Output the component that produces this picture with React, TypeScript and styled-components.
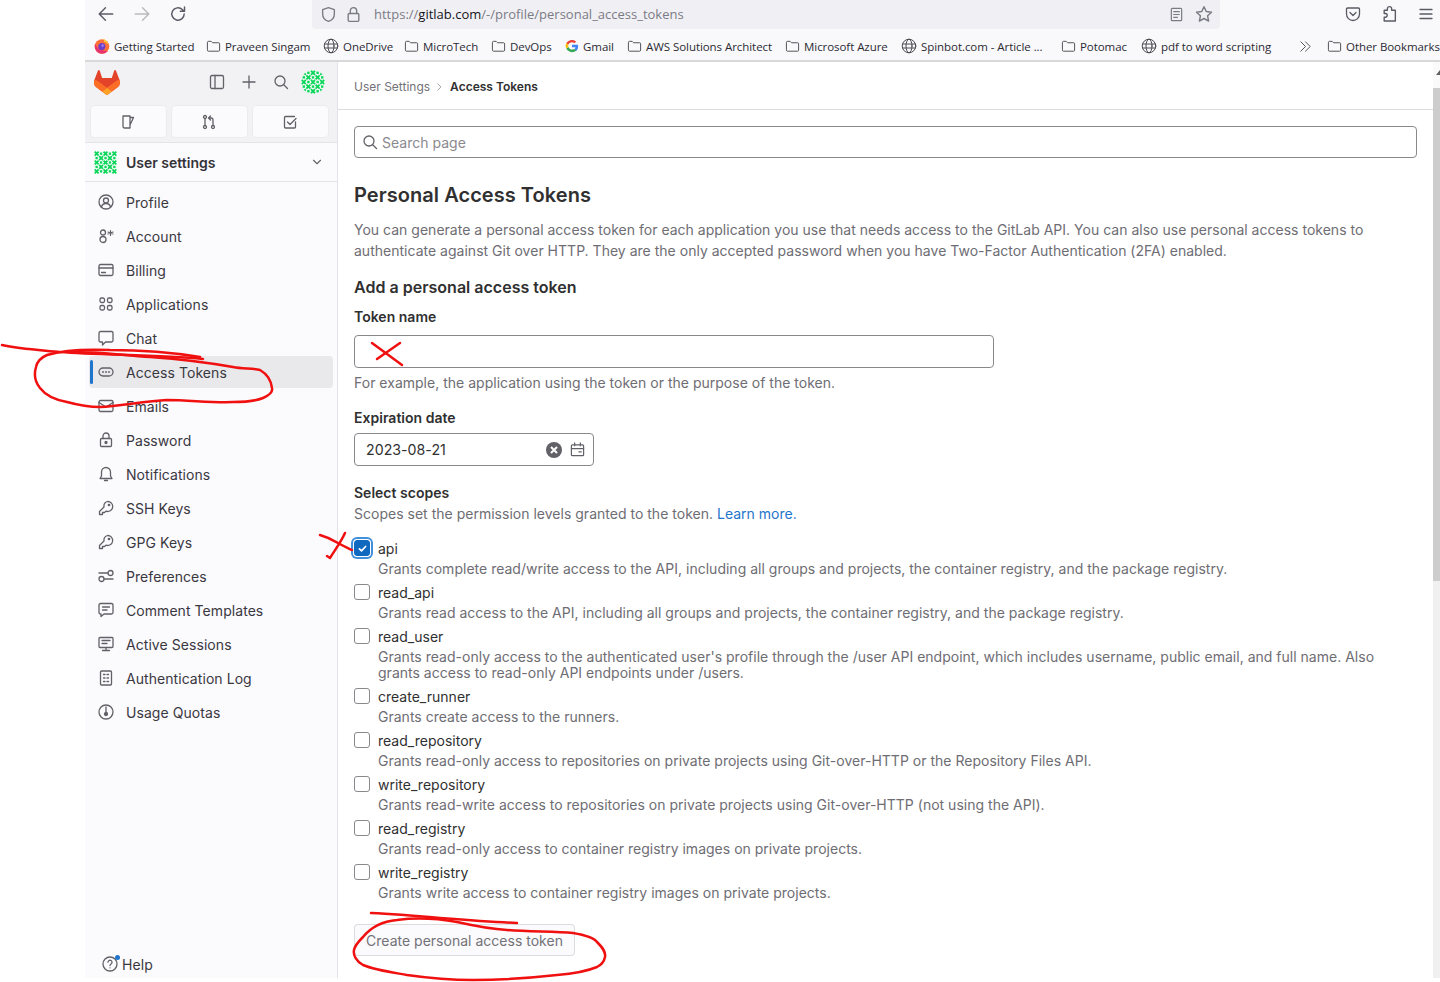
import React from 'react';
import styled, { createGlobalStyle } from 'styled-components';

const GlobalStyle = createGlobalStyle`
  html, body {
    margin: 0;
    padding: 0;
    background: #fff;
    overflow: hidden;
  }
  * {
    box-sizing: border-box;
  }
`;

const Page = styled.div`
  position: relative;
  width: 1440px;
  height: 982px;
  padding: 0 0 4px 85px;
  display: flex;
  flex-direction: column;
  font-family: Inter, "Liberation Sans", sans-serif;
  color: #333238;
  overflow: hidden;
`;

const Toolbar = styled.div`
  height: 30px;
  flex: none;
  display: flex;
  align-items: flex-start;
  background: #f9f9fb;
  color: #5b5b66;
`;

const NavGroup = styled.div`
  display: flex;
  align-items: center;
  gap: 18px;
  height: 28px;
  padding-left: 12px;
  width: 227px;
  flex: none;
`;

const UrlBar = styled.div`
  width: 908px;
  height: 29px;
  flex: none;
  border-radius: 0 0 4px 4px;
  background: #f0f0f4;
  display: flex;
  align-items: center;
  padding: 0 7px 1px 8px;
  gap: 8px;
  font-family: "Open Sans", sans-serif;
  font-size: 13px;
  color: #7b7b85;
`;

const UrlText = styled.span`
  flex: 1;
  margin-left: 4px;
  b {
    font-weight: 400;
    color: #15141a;
  }
`;

const UrlEnd = styled.span`
  display: flex;
  align-items: center;
  gap: 11px;
`;

const RightIcons = styled.div`
  flex: 1;
  height: 27px;
  display: flex;
  align-items: center;
  justify-content: flex-end;
  gap: 20px;
  padding-right: 6px;
`;

const Bookmarks = styled.div`
  height: 32px;
  flex: none;
  display: flex;
  align-items: center;
  padding: 2px 0 0 9px;
  background: #f9f9fb;
  border-bottom: 2px solid #d8d8d8;
  white-space: nowrap;
  font-family: "Open Sans", sans-serif;
  font-size: 11.5px;
  letter-spacing: -0.06px;
  color: #15141a;
`;

const Bookmark = styled.div<{ $w: number }>`
  display: flex;
  align-items: center;
  gap: 4px;
  width: ${p => p.$w}px;
  flex: none;
  color: #2b2a33;
`;

const Body = styled.div`
  flex: 1;
  min-height: 0;
  display: flex;
`;

const Sidebar = styled.aside`
  width: 253px;
  flex: none;
  display: flex;
  flex-direction: column;
  background: #fbfafd;
  border-right: 1px solid #e4e3e8;
`;

const SideTop = styled.div`
  background: #f2f1f4;
  flex: none;
  height: 81px;
  padding: 0 6px;
  border-bottom: 1px solid #e4e3e8;
`;

const LogoRow = styled.div`
  height: 44px;
  display: flex;
  align-items: center;
  padding: 0 6px 4px 3px;
  color: #626168;
`;

const LogoActions = styled.div`
  margin-left: auto;
  display: flex;
  align-items: center;
  gap: 16px;
`;

const Avatar = styled.span`
  display: flex;
  width: 24px;
  height: 24px;
  border-radius: 50%;
  overflow: hidden;
  margin-left: -4px;
`;

const ShortcutRow = styled.div`
  display: grid;
  grid-template-columns: repeat(3, 75px);
  gap: 6px;
`;

const Shortcut = styled.div`
  height: 31px;
  padding-right: 2px;
  background: #fbfafd;
  border-radius: 4px;
  box-shadow: 0 0 0 1px #ececef;
  display: flex;
  align-items: center;
  justify-content: center;
  color: #626168;
`;

const ContextRow = styled.div`
  height: 39px;
  flex: none;
  display: flex;
  align-items: center;
  gap: 9px;
  padding: 0 13px 0 9px;
  border-bottom: 1px solid #e4e3e8;
  font-size: 14px;
  font-weight: 600;
  color: #333238;
`;

const ContextChevron = styled.span`
  margin-left: auto;
  display: flex;
`;

const Nav = styled.nav`
  padding: 4px 4px 0 4px;
  display: flex;
  flex-direction: column;
  gap: 2px;
`;

const NavItem = styled.div<{ $active?: boolean }>`
  position: relative;
  height: 32px;
  display: flex;
  align-items: center;
  gap: 12px;
  padding-left: 8px;
  border-radius: 4px;
  font-size: 14px;
  letter-spacing: 0.06px;
  color: #3a383f;
  background: ${p => (p.$active ? '#e9e9ec' : 'transparent')};

  ${p =>
    p.$active &&
    `&::before {
      content: '';
      position: absolute;
      left: 1px;
      top: 4px;
      bottom: 4px;
      width: 3px;
      border-radius: 2px;
      background: #1f75cb;
    }`}
`;

const NavIcon = styled.span`
  width: 17px;
  height: 16px;
  display: flex;
  align-items: center;
  justify-content: center;
  color: #626168;
`;

const HelpRow = styled.div`
  margin-top: auto;
  height: 28px;
  display: flex;
  align-items: center;
  gap: 4px;
  padding-left: 17px;
  font-size: 14px;
  letter-spacing: 0.1px;
  color: #3a383f;
`;

const HelpIcon = styled.span`
  position: relative;
  display: flex;
  color: #626168;
  &::after {
    content: '';
    position: absolute;
    top: -1px;
    right: -2px;
    width: 5px;
    height: 5px;
    border-radius: 50%;
    background: #1f75cb;
  }
`;

const Main = styled.main`
  flex: 1;
  min-width: 0;
  display: flex;
  flex-direction: column;
`;

const Crumbs = styled.div`
  height: 48px;
  flex: none;
  display: flex;
  align-items: center;
  gap: 4px;
  padding: 2px 0 0 16px;
  border-bottom: 1px solid #dcdcde;
  font-size: 12px;
  color: #737278;
  b {
    margin-left: 2px;
    font-weight: 600;
    color: #303030;
  }
`;

const Content = styled.div`
  padding: 16px 16px 0 16px;
  font-size: 14px;
  letter-spacing: 0.012px;
  color: #6e6d73;
`;

const SearchBox = styled.div`
  height: 32px;
  border: 1px solid #89888d;
  border-radius: 4px;
  display: flex;
  align-items: center;
  gap: 4px;
  padding-left: 7px;
  color: #8a898f;
  svg {
    color: #626168;
  }
`;

const Title = styled.h1`
  margin: 24px 0 0;
  font-size: 20px;
  line-height: 26px;
  letter-spacing: 0.05px;
  font-weight: 600;
  color: #303030;
`;

const Lead = styled.p`
  margin: 11px 0 0;
  line-height: 21px;
  font-size: 14px;
`;

const Subtitle = styled.h2`
  margin: 16px 0 0;
  font-size: 16px;
  line-height: 20px;
  font-weight: 600;
  color: #303030;
`;

const Label = styled.div<{ $top: number }>`
  margin-top: ${p => p.$top}px;
  font-size: 14px;
  line-height: 20px;
  font-weight: 600;
  color: #303030;
`;

const TextInput = styled.div`
  margin-top: 8px;
  width: 640px;
  height: 33px;
  border: 1px solid #89888d;
  border-radius: 4px;
`;

const Hint = styled.div`
  margin-top: 5px;
  line-height: 20px;
`;

const DateInput = styled.div`
  margin-top: 5px;
  width: 240px;
  height: 33px;
  border: 1px solid #89888d;
  border-radius: 4px;
  display: flex;
  align-items: center;
  padding: 0 8px 0 11px;
  color: #303030;
  font-size: 14.2px;
`;

const DateIcons = styled.span`
  margin-left: auto;
  display: flex;
  align-items: center;
  gap: 8px;
  color: #626168;
`;

const ScopeHint = styled.div`
  margin-top: 1px;
  line-height: 20px;
  a {
    color: #1f75cb;
    text-decoration: none;
  }
`;

const ScopeList = styled.div`
  margin-top: 15px;
  display: flex;
  flex-direction: column;
`;

const Scope = styled.div`
  display: grid;
  grid-template-columns: 16px 1fr;
  column-gap: 8px;
  padding-bottom: 6px;
`;

const CheckBox = styled.span<{ $checked?: boolean }>`
  width: 16px;
  height: 16px;
  margin-top: 1px;
  border-radius: 3px;
  border: 1px solid ${p => (p.$checked ? '#1068bf' : '#89888d')};
  background: ${p => (p.$checked ? '#1068bf' : '#fff')};
  box-shadow: ${p => (p.$checked ? '0 0 0 1px #fff, 0 0 0 3px #428fdc' : 'none')};
  display: flex;
  align-items: center;
  justify-content: center;
`;

const ScopeName = styled.div`
  font-size: 14px;
  line-height: 20px;
  color: #303030;
`;

const ScopeText = styled.div`
  grid-column: 2;
  margin-top: 2px;
  line-height: 16px;
`;

const CreateButton = styled.div`
  margin-top: 17px;
  width: 221px;
  height: 32px;
  display: flex;
  align-items: center;
  justify-content: center;
  background: #fbfafd;
  border-radius: 4px;
  box-shadow: inset 0 0 0 1px #dcdcde;
  color: #737278;
`;

const Scrollbar = styled.div`
  width: 7px;
  flex: none;
  display: flex;
  flex-direction: column;
  background: #f0f0f0;
`;

const ScrollCap = styled.div`
  height: 26px;
  flex: none;
  padding-top: 8px;
  background: #fafafa;
  display: flex;
  justify-content: flex-end;
  color: #606060;
`;

const ScrollThumb = styled.div`
  height: 493px;
  flex: none;
  background: #cdcdcd;
`;

const Ink = styled.svg`
  position: absolute;
  left: 0;
  top: 0;
  pointer-events: none;
`;

const sidebarItems = [
  'Profile',
  'Account',
  'Billing',
  'Applications',
  'Chat',
  'Access Tokens',
  'Emails',
  'Password',
  'Notifications',
  'SSH Keys',
  'GPG Keys',
  'Preferences',
  'Comment Templates',
  'Active Sessions',
  'Authentication Log',
  'Usage Quotas',
];

const scopes = [
  ['api', 'Grants complete read/write access to the API, including all groups and projects, the container registry, and the package registry.'],
  ['read_api', 'Grants read access to the API, including all groups and projects, the container registry, and the package registry.'],
  ['read_user', "Grants read-only access to the authenticated user's profile through the /user API endpoint, which includes username, public email, and full name. Also grants access to read-only API endpoints under /users."],
  ['create_runner', 'Grants create access to the runners.'],
  ['read_repository', 'Grants read-only access to repositories on private projects using Git-over-HTTP or the Repository Files API.'],
  ['write_repository', 'Grants read-write access to repositories on private projects using Git-over-HTTP (not using the API).'],
  ['read_registry', 'Grants read-only access to container registry images on private projects.'],
  ['write_registry', 'Grants write access to container registry images on private projects.'],
];

const Icon: React.FC<{ size?: number; children: React.ReactNode; color?: string }> = ({ size = 16, children, color }) => (
  <svg width={size} height={size} viewBox="0 0 16 16" fill="none" stroke={color || 'currentColor'} strokeWidth="1.3" strokeLinecap="round" strokeLinejoin="round">
    {children}
  </svg>
);

const Folder = () => (
  <Icon size={15} color="#4a4a53">
    <path d="M1.5 3.5a1 1 0 0 1 1-1h3l1.5 1.5h6.500a1 1 0 0 1 1 1v7a1 1 0 0 1-1 1h-11a1 1 0 0 1-1-1z" strokeWidth="1" />
  </Icon>
);

const Globe = () => (
  <Icon size={16} color="#4a4a53">
    <g strokeWidth="1">
      <circle cx="8" cy="8" r="6.800" />
      <ellipse cx="8" cy="8" rx="3" ry="6.800" />
      <path d="M1.500 6h13M1.500 10h13" />
    </g>
  </Icon>
);

const Firefox = () => (
  <svg width="16" height="16" viewBox="0 0 16 16">
    <circle cx="8" cy="8.500" r="7.300" fill="#ff7139" />
    <path d="M8 15.800A7.300 7.300 0 0 1 .7 8.500c0-1 .2-2 .6-2.800 1 4 5 7 12.500 7.200A7.300 7.300 0 0 1 8 15.800z" fill="#e8356f" />
    <path d="M9 .5c3 1.500 5 4 6 7-1-1.500-3-3.500-5-4 .2-1 .000-2-1-3z" fill="#ffd43a" />
    <circle cx="7.800" cy="8.500" r="3.500" fill="#6b3fc9" />
    <circle cx="8.600" cy="7.600" r="1.300" fill="#a77be8" />
  </svg>
);

const GoogleG = () => (
  <svg width="14" height="14" viewBox="0 0 16 16">
    <path d="M15 8.200c0-.6-.1-1-.2-1.500H8v2.800h4c-.2 1-.7 1.700-1.500 2.300l2.300 1.800C14.200 12.300 15 10.400 15 8.200z" fill="#4285f4" />
    <path d="M8 15c2 0 3.600-.7 4.800-1.800l-2.300-1.800c-.7.400-1.500.7-2.500.7-1.900 0-3.500-1.300-4.100-3L1.500 10.900C2.700 13.400 5.100 15 8 15z" fill="#34a853" />
    <path d="M3.900 9.100c-.3-.9-.3-1.800 0-2.700L1.500 4.600c-1 2-1 4.300 0 6.300z" fill="#fbbc05" />
    <path d="M8 3.800c1 0 2 .4 2.700 1.100l2.100-2.100C11.500 1.600 9.800 1 8 1 5.100 1 2.700 2.600 1.500 4.600l2.400 1.800c.6-1.500 2.200-2.600 4.100-2.600z" fill="#ea4335" />
  </svg>
);

const Tanuki = () => (
  <svg width="26" height="25" viewBox="0 0 25 24">
    <path d="m24.507 9.5-.034-.09L21.082.562a.896.896 0 0 0-1.694.091l-2.29 7.01H7.825L5.535.653a.898.898 0 0 0-1.694-.09L.451 9.411.416 9.5a6.297 6.297 0 0 0 2.09 7.278l.012.01.03.022 5.16 3.867 2.56 1.935 1.554 1.176a1.051 1.051 0 0 0 1.268 0l1.555-1.176 2.56-1.935 5.197-3.89.014-.01A6.297 6.297 0 0 0 24.507 9.5Z" fill="#e24329" />
    <path d="m24.507 9.5-.034-.09a11.44 11.44 0 0 0-4.56 2.051l-7.447 5.632 4.742 3.584 5.197-3.89.014-.01A6.297 6.297 0 0 0 24.507 9.5Z" fill="#fc6d26" />
    <path d="m7.707 20.677 2.56 1.935 1.555 1.176a1.051 1.051 0 0 0 1.268 0l1.555-1.176 2.56-1.935-4.743-3.584-4.755 3.584Z" fill="#fca326" />
    <path d="M5.010 11.461a11.430 11.430 0 0 0-4.560-2.050L.416 9.500a6.297 6.297 0 0 0 2.090 7.278l.012.010.030.022 5.160 3.867 4.745-3.584-7.444-5.632Z" fill="#fc6d26" />
  </svg>
);

const Identicon: React.FC<{ size: number; round?: boolean }> = ({ size, round }) => {
  const cells: React.ReactNode[] = [];
  for (let r = 0; r < 5; r++) {
    for (let c = 0; c < 5; c++) {
      const cx = c * 5 + 3;
      const cy = r * 5 + 3;
      if ((r + c) % 2 === 0) {
        cells.push(<path key={`${r}-${c}`} d={`M${cx - 2.2} ${cy - 2.2}L${cx + 2.2} ${cy + 2.2}M${cx + 2.2} ${cy - 2.2}L${cx - 2.2} ${cy + 2.2}`} stroke="#0bd65a" strokeWidth="2" />);
      } else {
        cells.push(<rect key={`${r}-${c}`} x={cx - 1.3} y={cy - 1.3} width="2.600" height="2.600" fill="#0bd65a" />);
      }
    }
  }
  return (
    <svg width={size} height={size} viewBox="0 0 26 26">
      <rect width="26" height="26" rx={round ? 13 : 2} fill="#f2fbf5" />
      {cells}
    </svg>
  );
};

const navGlyph = (name: string) => {
  switch (name) {
    case 'Profile':
      return <><circle cx="8" cy="8" r="7" /><circle cx="8" cy="6.500" r="2.500" /><path d="M3.500 13c.5-2.500 2.500-3.500 4.500-3.500s4 1 4.500 3.500" /></>;
    case 'Account':
      return <><circle cx="5" cy="4.500" r="2.500" /><rect x="2" y="8.500" width="6" height="6" rx="3" /><path d="M12.500 2.500v5M10 4l5 2M15 4l-5 2" strokeWidth="1.200" /></>;
    case 'Billing':
      return <><rect x="1" y="2.500" width="14" height="11" rx="1.500" /><path d="M1 6h14M3.500 10.500h4" /></>;
    case 'Applications':
      return <><rect x="2" y="2" width="4.500" height="4.500" rx="1.500" /><rect x="9.500" y="2" width="4.500" height="4.500" rx="1.500" /><rect x="2" y="9.500" width="4.500" height="4.500" rx="1.500" /><rect x="9.500" y="9.500" width="4.500" height="4.500" rx="1.500" /></>;
    case 'Chat':
      return <path d="M2.500 1.500h11a1.500 1.500 0 0 1 1.500 1.500v7.500a1.500 1.500 0 0 1-1.500 1.500H7.500l-3 3v-3h-2A1.500 1.500 0 0 1 1 10.500V3a1.500 1.500 0 0 1 1.500-1.500z" />;
    case 'Access Tokens':
      return <><rect x="1" y="4" width="14" height="8" rx="4" /><path d="M5 8h.01M8 8h.01M11 8h.01" strokeWidth="1.800" /></>;
    case 'Emails':
      return <><rect x="1" y="2.500" width="14" height="11" rx="1.500" /><path d="M1 4.500l7 4.500 7-4.500" /></>;
    case 'Password':
      return <><rect x="2.500" y="6.500" width="11" height="8" rx="1" /><path d="M5 6.500V4a3 3 0 0 1 6 0v2.500" /><circle cx="8" cy="10.500" r="1" fill="currentColor" /></>;
    case 'Notifications':
      return <path d="M2 12.500h12l-1.500-2.500V6a4.500 4.500 0 0 0-9 0v4zM6.500 14.500h3" />;
    case 'SSH Keys':
    case 'GPG Keys':
      return <><path d="M9.500 1.500a5 5 0 1 1-1.500 9.700L6.500 12.500h-2v2h-3v-3l4.500-4.500a5 5 0 0 1 3.500-5.500z" /><circle cx="11" cy="5" r="0.700" /></>;
    case 'Preferences':
      return <><path d="M1 5h9M6 11h9" /><circle cx="12.500" cy="5" r="2.500" /><circle cx="3.500" cy="11" r="2.500" /></>;
    case 'Comment Templates':
      return <><path d="M2.500 1.500h11a1.500 1.500 0 0 1 1.500 1.500v7.500a1.500 1.500 0 0 1-1.500 1.500H6l-3 2.500V12h-.5A1.500 1.500 0 0 1 1 10.500V3a1.500 1.500 0 0 1 1.500-1.500z" /><path d="M4.500 5h7M4.500 8h4.500" /></>;
    case 'Active Sessions':
      return <><rect x="1" y="1.500" width="14" height="10" rx="1" /><path d="M4 4.500h8M4 7.500h5M8 11.500v3M4.500 14.500h7" /></>;
    case 'Authentication Log':
      return <><rect x="2.500" y="1" width="11" height="14" rx="1" /><path d="M5.500 4.500h1.500M9 4.500h1.500M5.500 8h1.500M9 8h1.500M5.500 11.500h1.500M9 11.500h1.500" /></>;
    default:
      return <><circle cx="8" cy="8" r="7" /><path d="M8 3v6" /><circle cx="8" cy="10" r="1.500" fill="currentColor" /></>;
  }
};

const App: React.FC = () => {
  return (
    <Page>
      <GlobalStyle />
      <Toolbar>
        <NavGroup>
          <Icon size={18}><path d="M14 8H2.500M7.500 2.500L2 8l5.500 5.500" /></Icon>
          <Icon size={18} color="#b9b9c0"><path d="M2 8h11.500M8.500 2.500L14 8l-5.500 5.500" /></Icon>
          <Icon size={18}><path d="M13.500 8a5.500 5.500 0 1 1-1.700-4L13.500 5.500M13.800 1.800v3.700h-3.700" /></Icon>
        </NavGroup>
        <UrlBar>
          <Icon size={17}><path d="M8 1.500L2.500 3.500v4c0 3.500 2.500 6 5.500 7 3-1 5.500-3.500 5.500-7v-4z" /></Icon>
          <Icon size={17}><rect x="3" y="7" width="10" height="7.500" rx="1" /><path d="M5 7V4.500a3 3 0 0 1 6 0V7" /></Icon>
          <UrlText>https://<b>gitlab.com</b>/-/profile/personal_access_tokens</UrlText>
          <UrlEnd>
            <Icon size={15}><rect x="2.500" y="1.500" width="11" height="13" rx="1" /><path d="M5 5h6M5 8h6M5 11h4" /></Icon>
            <Icon size={18}><path d="M8 1.500l2 4.300 4.700.6-3.500 3.200.9 4.700L8 12l-4.100 2.300.9-4.700L1.300 6.400 6 5.800z" /></Icon>
          </UrlEnd>
        </UrlBar>
        <RightIcons>
          <Icon size={16}><path d="M2.500 2h11a1 1 0 0 1 1 1v5a6.500 6.500 0 0 1-13 0V3a1 1 0 0 1 1-1z" /><path d="M5 6.500L8 9.500l3-3" /></Icon>
          <Icon size={17}><path d="M6 5V3.500a2 2 0 0 1 4 0V5h3.500v10H3v-3.500h1.500a1.800 1.800 0 0 0 0-3.500H3V5z" /></Icon>
          <Icon size={16}><path d="M2 3.500h12M2 8h12M2 12.500h12" /></Icon>
        </RightIcons>
      </Toolbar>
      <Bookmarks>
        <Bookmark $w={112}><Firefox />Getting Started</Bookmark>
        <Bookmark $w={117}><Folder />Praveen Singam</Bookmark>
        <Bookmark $w={81}><Globe />OneDrive</Bookmark>
        <Bookmark $w={87}><Folder />MicroTech</Bookmark>
        <Bookmark $w={74}><Folder />DevOps</Bookmark>
        <Bookmark $w={62}><GoogleG />Gmail</Bookmark>
        <Bookmark $w={158}><Folder />AWS Solutions Architect</Bookmark>
        <Bookmark $w={116}><Folder />Microsoft Azure</Bookmark>
        <Bookmark $w={160}><Globe />Spinbot.com - Article ...</Bookmark>
        <Bookmark $w={80}><Folder />Potomac</Bookmark>
        <Bookmark $w={157}><Globe />pdf to word scripting</Bookmark>
        <Bookmark $w={29}><Icon size={15} color="#4a4a53"><path d="M3 3l5 5-5 5M8 3l5 5-5 5" strokeWidth="1" /></Icon></Bookmark>
        <Bookmark $w={113}><Folder />Other Bookmarks</Bookmark>
      </Bookmarks>
      <Body>
        <Sidebar>
          <SideTop>
            <LogoRow>
              <Tanuki />
              <LogoActions>
                <Icon><rect x="1.500" y="1.500" width="13" height="13" rx="1.500" /><path d="M6 1.500v13" /></Icon>
                <Icon><path d="M8 2v12M2 8h12" /></Icon>
                <Icon><circle cx="7" cy="7" r="5" /><path d="M11 11l3.500 3.500" /></Icon>
                <Avatar><Identicon size={24} round /></Avatar>
              </LogoActions>
            </LogoRow>
            <ShortcutRow>
              <Shortcut><Icon><path d="M3 2h7v12H4.500A1.500 1.500 0 0 1 3 12.500zM10 3.500h3.500L10 11" /></Icon></Shortcut>
              <Shortcut><Icon><circle cx="4" cy="3" r="1.500" /><circle cx="4" cy="13" r="1.500" /><circle cx="12" cy="13" r="1.500" /><path d="M4 4.500v7M12 11.500V6a2 2 0 0 0-2-2H8M9.500 2L7.500 4l2 2" /></Icon></Shortcut>
              <Shortcut><Icon><path d="M13.500 8v5a1 1 0 0 1-1 1h-9a1 1 0 0 1-1-1V3.500a1 1 0 0 1 1-1h9M5.500 8l2.500 2.500 6-6" /></Icon></Shortcut>
            </ShortcutRow>
          </SideTop>
          <ContextRow>
            <Identicon size={23} />
            User settings
            <ContextChevron><Icon size={14} color="#626168"><path d="M4 6l4 4 4-4" /></Icon></ContextChevron>
          </ContextRow>
          <Nav>
            {sidebarItems.map(item => (
              <NavItem key={item} $active={item === 'Access Tokens'}>
                <NavIcon><Icon>{navGlyph(item)}</Icon></NavIcon>
                {item}
              </NavItem>
            ))}
          </Nav>
          <HelpRow>
            <HelpIcon>
              <Icon><circle cx="8" cy="8" r="7" /><path d="M6 6.200a2 2 0 1 1 3 1.800c-.700.400-1 .800-1 1.500M8 11.800h.01" /></Icon>
            </HelpIcon>
            Help
          </HelpRow>
        </Sidebar>
        <Main>
          <Crumbs>
            User Settings
            <Icon size={10} color="#89888d"><path d="M6 3l5 5-5 5" /></Icon>
            <b>Access Tokens</b>
          </Crumbs>
          <Content>
            <SearchBox>
              <Icon><circle cx="7" cy="7" r="5" /><path d="M11 11l3.500 3.500" /></Icon>
              Search page
            </SearchBox>
            <Title>Personal Access Tokens</Title>
            <Lead>
              You can generate a personal access token for each application you use that needs access to the GitLab API. You can also use personal access tokens to authenticate against Git over HTTP. They are the only accepted password when you have Two-Factor Authentication (2FA) enabled.
            </Lead>
            <Subtitle>Add a personal access token</Subtitle>
            <Label $top={10}>Token name</Label>
            <TextInput />
            <Hint>For example, the application using the token or the purpose of the token.</Hint>
            <Label $top={15}>Expiration date</Label>
            <DateInput>
              2023-08-21
              <DateIcons>
                <svg width="16" height="16" viewBox="0 0 16 16">
                  <circle cx="8" cy="8" r="8" fill="#626168" />
                  <path d="M5 5l6 6M11 5l-6 6" stroke="#fff" strokeWidth="2" />
                </svg>
                <Icon size={15}><rect x="1.500" y="3" width="13" height="11.500" rx="1" /><path d="M1.500 7h13M5 1v3M11 1v3M9.500 10.500h2.500" /></Icon>
              </DateIcons>
            </DateInput>
            <Label $top={17}>Select scopes</Label>
            <ScopeHint>Scopes set the permission levels granted to the token. <a>Learn more.</a></ScopeHint>
            <ScopeList>
              {scopes.map(([name, text], i) => (
                <Scope key={name}>
                  <CheckBox $checked={i === 0}>
                    {i === 0 && <Icon size={11} color="#fff"><path d="M3.500 8.500l3 3 6-6.500" strokeWidth="2.400" /></Icon>}
                  </CheckBox>
                  <ScopeName>{name}</ScopeName>
                  <ScopeText>{text}</ScopeText>
                </Scope>
              ))}
            </ScopeList>
            <CreateButton>Create personal access token</CreateButton>
          </Content>
        </Main>
        <Scrollbar>
          <ScrollCap>
            <svg width="4" height="5" viewBox="0 0 4 5"><path d="M0 5L4 0v5z" fill="currentColor" /></svg>
          </ScrollCap>
          <ScrollThumb />
        </Scrollbar>
      </Body>
      <Ink width="1440" height="982" viewBox="0 0 1440 982" fill="none" stroke="#f01010" strokeWidth="2.500" strokeLinecap="round" strokeLinejoin="round">
        <path d="M2 345 C20 349 40 350 60 352 C100 355 160 355 203 359" />
        <path d="M200 357 C170 352 140 350 110 350 C85 349 60 351 47 355 C40 358 37 362 36 367 C34 374 35 382 40 388 C46 396 56 400 67 402 C78 405 90 407 100 407 C120 406 145 401 167 400 C190 400 212 403 233 402 C246 402 256 401 263 398 C270 395 273 392 272 388 C271 380 267 374 260 370 C252 368 243 369 233 367 C205 362 178 359 150 357 C123 355 95 352 70 351" />
        <path d="M372 343 L402 365 M400 343 L377 359" />
        <path d="M320 535 C327 537 333 540 338 543 C343 546 348 548 352 550 M345 533 C341 542 335 550 330 558 L327 556" />
        <path d="M371 913 C395 914 418 916 440 918 C466 920 492 922 517 923" />
        <path d="M363 937 C372 926 385 921 397 920 C420 917 440 919 457 922 C475 926 490 929 507 930 C530 932 555 931 573 933 C585 935 594 938 597 942 C603 948 606 952 605 957 C604 962 601 965 597 967 C585 972 570 974 557 975 C530 978 500 980 473 980 C450 980 428 978 407 975 C390 972 375 970 363 965 C356 961 353 955 354 950 C355 945 359 941 363 937" />
      </Ink>
    </Page>
  );
};

export default App;
